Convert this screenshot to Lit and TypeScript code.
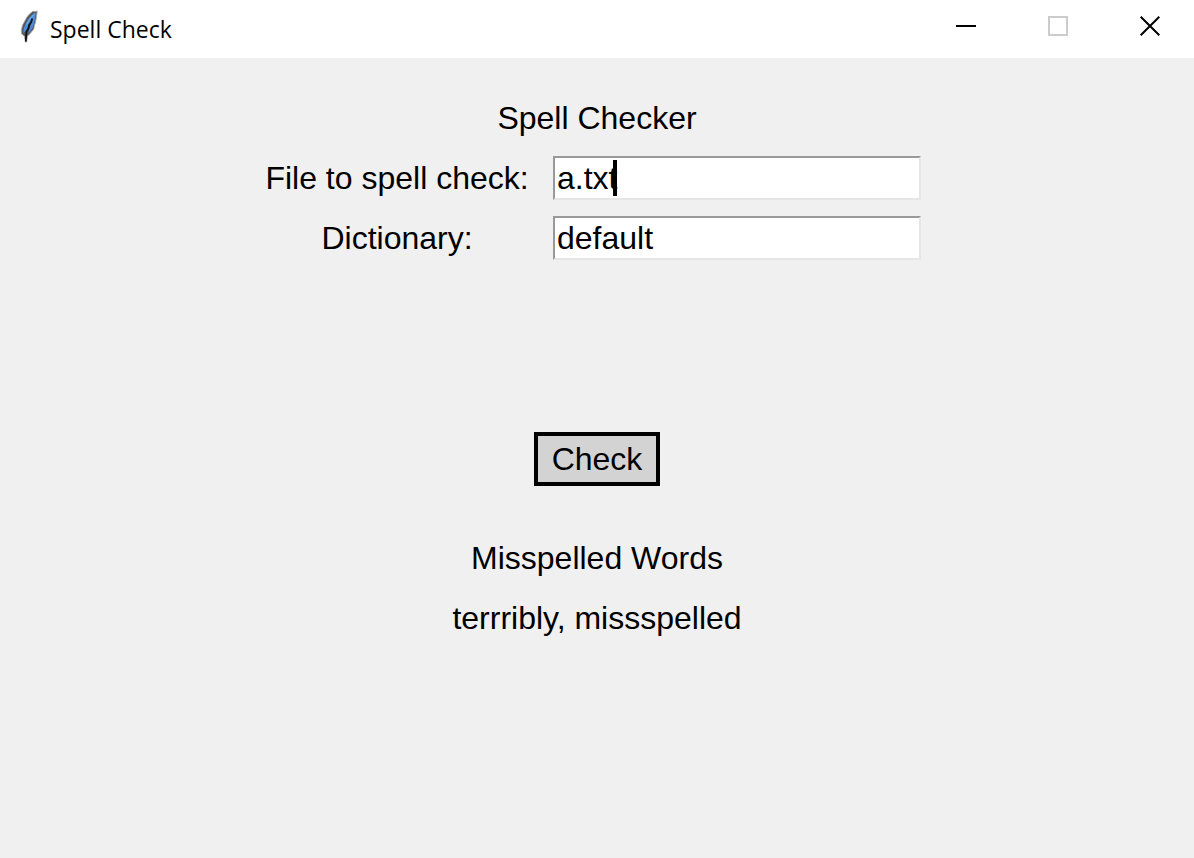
import { LitElement, html, css } from "lit";
import { customElement, property, state } from "lit/decorators.js";

@customElement("window-title-bar")
class WindowTitleBar extends LitElement {
  @property() heading = "";

  static styles = css`
    :host {
      display: block;
      background: #fff;
    }
    .bar {
      display: flex;
      align-items: stretch;
      gap: 4px;
      height: 58px;
    }
    .title {
      display: flex;
      align-items: center;
      flex: 1;
      gap: 6px;
      margin: 0;
      padding-left: 14px;
      color: #000;
      font: 400 23px/34px "Open Sans", "Noto Sans", sans-serif;
    }
    .feather {
      width: 30px;
      height: 36px;
      margin-bottom: 6px;
    }
    .control {
      display: flex;
      align-items: center;
      justify-content: center;
      width: 88px;
      margin: 0;
      padding: 0 0 6px;
      border: 0;
      background: none;
    }
    .control svg {
      display: block;
      width: 20px;
      height: 20px;
    }
    .control:not(:disabled):hover {
      background: #e5e5e5;
    }
  `;

  render() {
    return html`
      <header class="bar">
        <h1 class="title">
          <svg class="feather" viewBox="0 0 30 36" aria-hidden="true">
            <path d="M23.2 3.2 L18.6 3.5 C15.4 5.6 13 8.6 11.3 12 L8.4 17.4 L7.3 22.5 L7.6 26 L10.3 28 L11.6 34.2 L12.6 34 L13.4 28.2 L16.4 25.3 L19.8 21 L20.4 17.6 L21.6 14 L22.4 9.6 Z" fill="#54565a" stroke="#a8a8a8" stroke-width="0.9" />
            <path d="M21.8 4.6 C17.4 6.4 13.6 11.6 11.2 17 C9.8 20.2 9 23.2 9.4 25.6 L12.2 22 L16.8 12.4 L17.8 13.8 L14 25.6 L16.2 23.6 L18.4 20 L19.6 16.6 L21 12 Z" fill="#4b8ddb" />
            <path d="M18.2 10.6 L17.2 14.2 L15.2 17 L14.4 20.4 L12.4 24 L11.8 33.5" fill="none" stroke="#101318" stroke-width="1.8" />
            <path d="M20.5 6.4 C16.8 9 14.6 12.5 12.8 16.5" fill="none" stroke="#7db4ee" stroke-width="1" />
          </svg>
          <span>${this.heading}</span>
        </h1>
        <button class="control" type="button" aria-label="Minimize">
          <svg viewBox="0 0 20 20" aria-hidden="true">
            <path d="M0 10H20" stroke="#000" stroke-width="2" />
          </svg>
        </button>
        <button class="control" type="button" aria-label="Maximize" disabled>
          <svg viewBox="0 0 20 20" aria-hidden="true">
            <path d="M1 1H19V19H1Z" fill="none" stroke="#ccc" stroke-width="2" />
          </svg>
        </button>
        <button class="control" type="button" aria-label="Close">
          <svg viewBox="0 0 20 20" aria-hidden="true">
            <path d="M.7 .7L19.3 19.3M19.3 .7L.7 19.3" stroke="#000" stroke-width="2" />
          </svg>
        </button>
      </header>
    `;
  }
}

@customElement("app-root")
class AppRoot extends LitElement {
  @state() private file = "a.txt";
  @state() private dictionary = "default";
  @state() private misspelled = ["terrribly", "missspelled"];

  static styles = css`
    :host {
      display: flex;
      flex-direction: column;
      min-height: 100vh;
      background: #f0f0f0;
      color: #000;
      font: 400 32px/36px "Liberation Sans", Arial, sans-serif;
    }
    .content {
      display: flex;
      flex-direction: column;
      align-items: center;
      padding: 30px 16px;
    }
    .heading {
      margin: 0;
      font: inherit;
      line-height: 60px;
    }
    .form {
      display: flex;
      flex-direction: column;
      align-items: center;
      gap: 164px;
      max-width: 100%;
    }
    .fields {
      display: grid;
      grid-template-columns: 280px minmax(0, 400px);
      grid-auto-rows: 60px;
      align-items: center;
    }
    .label {
      text-align: center;
      white-space: nowrap;
    }
    .entry {
      position: relative;
      padding: 0 16px;
    }
    .input {
      display: block;
      box-sizing: border-box;
      width: 100%;
      height: 44px;
      margin: 0;
      padding: 2px;
      border: 2px solid;
      border-color: #999 #e6e6e6 #e6e6e6 #999;
      border-radius: 0;
      outline: 0;
      background: #fff;
      color: inherit;
      font: inherit;
    }
    .caret {
      position: absolute;
      top: 4px;
      left: 76px;
      width: 4px;
      height: 36px;
      background: #000;
      pointer-events: none;
    }
    .check {
      margin: 0;
      padding: 5px 14px;
      border: 4px solid #000;
      border-radius: 0;
      background: #d3d3d3;
      color: inherit;
      font: inherit;
    }
    .results {
      padding-top: 42px;
      text-align: center;
    }
    .words {
      margin: 0;
      line-height: 60px;
    }
  `;

  private setFile(event: Event) {
    this.file = (event.target as HTMLInputElement).value;
  }

  private setDictionary(event: Event) {
    this.dictionary = (event.target as HTMLInputElement).value;
  }

  render() {
    return html`
      <window-title-bar heading="Spell Check"></window-title-bar>
      <main class="content">
        <h2 class="heading">Spell Checker</h2>
        <form class="form" @submit=${(event: Event) => event.preventDefault()}>
          <div class="fields">
            <label class="label" for="file">File to spell check:</label>
            <div class="entry">
              <input class="input" id="file" type="text" spellcheck="false" .value=${this.file} @input=${this.setFile} />
              ${this.file === "a.txt" ? html`<span class="caret"></span>` : ""}
            </div>
            <label class="label" for="dictionary">Dictionary:</label>
            <div class="entry">
              <input class="input" id="dictionary" type="text" spellcheck="false" .value=${this.dictionary} @input=${this.setDictionary} />
            </div>
          </div>
          <button class="check" type="submit">Check</button>
        </form>
        <section class="results">
          <h2 class="heading">Misspelled Words</h2>
          <p class="words">${this.misspelled.join(", ")}</p>
        </section>
      </main>
    `;
  }
}
